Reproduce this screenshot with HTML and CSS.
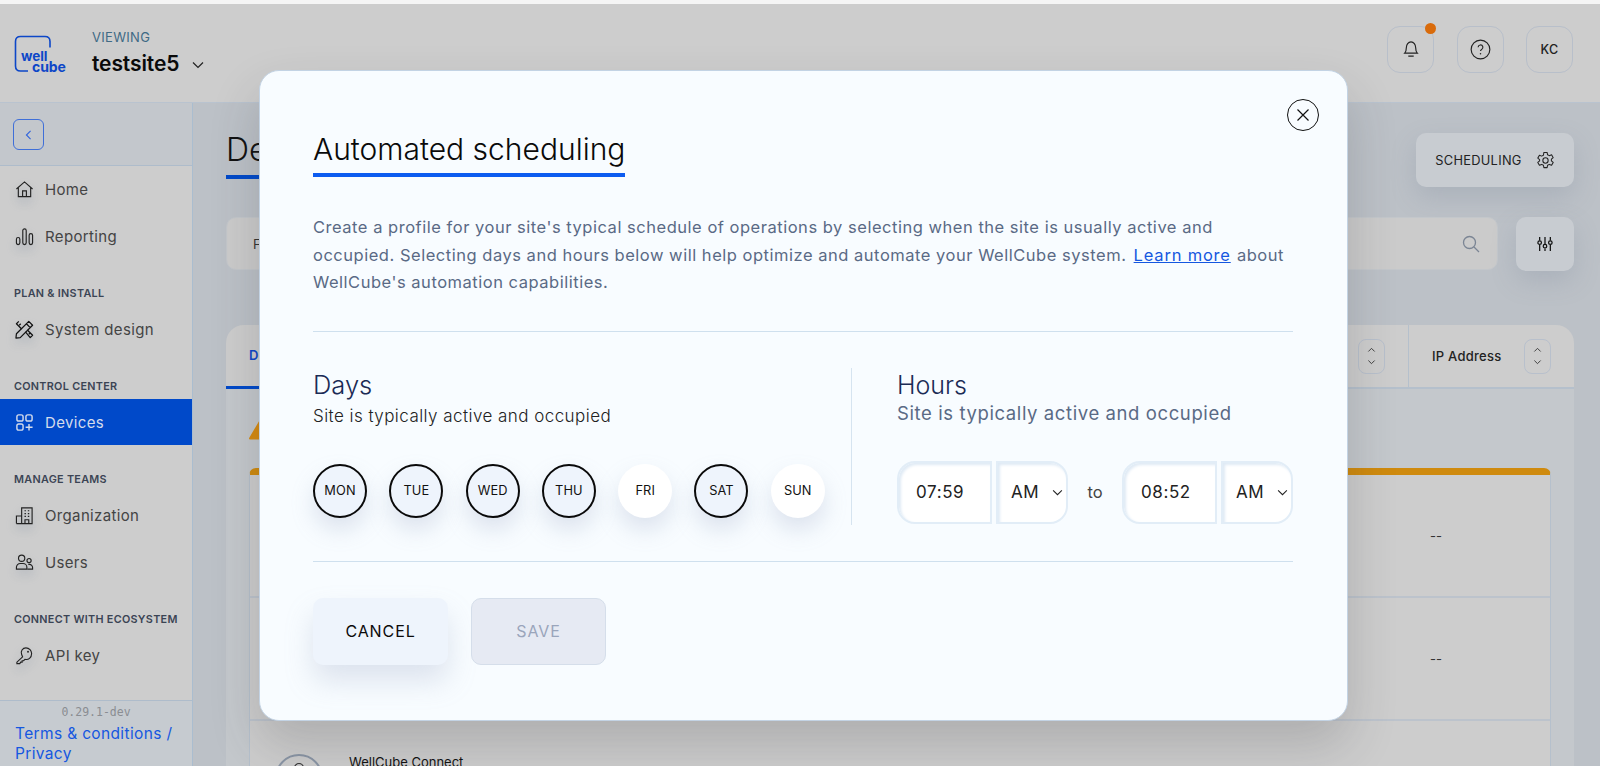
FILE: index.html
```html
<!DOCTYPE html>
<html lang="en">
<head>
<meta charset="utf-8">
<title>WellCube - Automated scheduling</title>
<link rel="stylesheet" href="styles.css">
</head>
<body>
<div class="app">
  <header class="topbar">
    <div class="logo">
      <svg class="logo-mark" viewBox="0 0 37 37" width="37" height="37"><path d="M36 12.500V6.500Q36 1.500 31 1.500H6.500Q1.500 1.500 1.500 6.500V31Q1.500 36 6.500 36H14" fill="none" stroke="#0d47c8" stroke-width="1.600"/></svg>
      <span class="logo-well">well</span>
      <span class="logo-cube">cube</span>
    </div>
    <div class="site">
      <div class="site-label">VIEWING</div>
      <div class="site-name">testsite5 <svg class="site-chev" viewBox="0 0 12 8" width="12" height="8"><path d="M1 1.500l5 5 5-5" fill="none" stroke="#222" stroke-width="1.200"/></svg></div>
    </div>
    <div class="top-actions">
      <button class="top-btn has-dot"><svg viewBox="0 0 20 22" width="18" height="20"><path d="M3 15.500c1.500-1.500 1.800-3 1.800-6C4.800 6 7 3 10 3s5.200 3 5.200 6.500c0 3 .3 4.500 1.800 6zM7 19h6" fill="none" stroke="#222" stroke-width="1.300"/></svg></button>
      <button class="top-btn"><svg viewBox="0 0 22 22" width="21" height="21"><circle cx="11" cy="11" r="9.800" fill="none" stroke="#222" stroke-width="1.200"/><path d="M8.500 8.700a2.500 2.500 0 1 1 3.700 2.200c-.8.500-1.200 1-1.200 1.800" fill="none" stroke="#222" stroke-width="1.200"/><circle cx="11" cy="15.500" r=".8" fill="#222"/></svg></button>
      <button class="top-btn top-initials">KC</button>
    </div>
  </header>

  <div class="layout">
    <aside class="sidebar">
      <div class="side-top">
        <button class="back-btn"><svg viewBox="0 0 8 12" width="7" height="10"><path d="M6.500 1L1.500 6l5 5" fill="none" stroke="#2f63dc" stroke-width="1.300"/></svg></button>
      </div>
      <nav class="side-nav">
        <div class="nav-group nav-first">
          <a class="nav-item"><svg class="ico" viewBox="0 0 20 20"><path d="M1.500 9.500L10 2l8.500 7.500M3.500 8v9.500h13V8M8 17.500v-6h4v6" fill="none" stroke="#222" stroke-width="1.200"/></svg>Home</a>
          <a class="nav-item"><svg class="ico" viewBox="0 0 20 20"><rect x="1.500" y="11" width="3.600" height="7.500" rx="1.800" fill="none" stroke="#222" stroke-width="1.200"/><rect x="8.200" y="2" width="3.600" height="16.500" rx="1.800" fill="none" stroke="#222" stroke-width="1.200"/><rect x="14.900" y="7" width="3.600" height="11.500" rx="1.800" fill="none" stroke="#222" stroke-width="1.200"/></svg>Reporting</a>
        </div>
        <div class="nav-group">
          <div class="nav-label">PLAN &amp; INSTALL</div>
          <a class="nav-item"><svg class="ico" viewBox="0 0 20 20"><path d="M14.500 1.500l4 4L5.500 18.500l-4.500.5.500-4.500zM12 4l4 4" fill="none" stroke="#111" stroke-width="1.300" stroke-linejoin="round"/><path d="M4 1.500L1.500 4 7 9.500M11 12.500l5 6 2.500-2.500-5.500-5.500M4.500 5.500l1.500-1.500M14.500 15l1.500-1.500" fill="none" stroke="#111" stroke-width="1.300" stroke-linejoin="round"/></svg>System design</a>
        </div>
        <div class="nav-group">
          <div class="nav-label">CONTROL CENTER</div>
          <a class="nav-item nav-active"><svg class="ico" viewBox="0 0 20 20"><rect x="2" y="2" width="6.500" height="6.500" rx="2" fill="none" stroke="#d4dcec" stroke-width="1.500"/><rect x="11.500" y="2" width="6.500" height="6.500" rx="2" fill="none" stroke="#d4dcec" stroke-width="1.500"/><rect x="2" y="11.500" width="6.500" height="6.500" rx="2" fill="none" stroke="#d4dcec" stroke-width="1.500"/><path d="M14.750 11.500V18.500M11.200 15h7.300" fill="none" stroke="#d4dcec" stroke-width="1.500"/></svg>Devices</a>
        </div>
        <div class="nav-group">
          <div class="nav-label">MANAGE TEAMS</div>
          <a class="nav-item"><svg class="ico" viewBox="0 0 20 20"><path d="M7 18.500V2h11v16.500zM1.500 18.500V10.500H7M1.500 18.500H18" fill="none" stroke="#222" stroke-width="1.200"/><path d="M10 5h1.500M13.500 5H15M10 8h1.500M13.500 8H15M10 11h1.500M13.500 11H15" stroke="#222" stroke-width="1.300"/><path d="M10.500 18.500v-4h4v4" fill="none" stroke="#222" stroke-width="1.200"/></svg>Organization</a>
          <a class="nav-item"><svg class="ico" viewBox="0 0 20 20"><circle cx="7" cy="5.500" r="3.300" fill="none" stroke="#222" stroke-width="1.200"/><path d="M1.500 17v-2a4 4 0 0 1 4-4h3a4 4 0 0 1 4 4v2z" fill="none" stroke="#222" stroke-width="1.200"/><circle cx="14.800" cy="8" r="2.200" fill="none" stroke="#222" stroke-width="1.200"/><path d="M14 12h1.200a3.300 3.300 0 0 1 3.300 3.300V17h-5.500" fill="none" stroke="#222" stroke-width="1.200"/></svg>Users</a>
        </div>
        <div class="nav-group">
          <div class="nav-label">CONNECT WITH ECOSYSTEM</div>
          <a class="nav-item"><svg class="ico" viewBox="0 0 20 20"><path d="M8 11.500l-6 5.500v1.500h3l1-1.500h1.500v-1.500h1.500l1.500-1.500c3.500 1 7-1.500 7-6 0-3-2.500-6-6-6-3.500 0-6 3.500-4.500 7z" fill="none" stroke="#222" stroke-width="1.200"/><circle cx="13.700" cy="6" r="1" fill="#222"/></svg>API key</a>
        </div>
      </nav>
      <div class="side-foot">
        <div class="version">0.29.1-dev</div>
        <a class="terms">Terms &amp; conditions / Privacy</a>
      </div>
    </aside>

    <main class="main">
      <div class="title-row">
        <h1 class="page-title">Devices</h1>
        <button class="sched-btn">SCHEDULING <svg viewBox="0 0 20 20" width="19" height="19"><path d="M8.300 1.500h3.400l.5 2.500 1.800.9 2.400-.9 1.700 3-1.900 1.600v1.800l1.900 1.600-1.700 3-2.400-.9-1.800.9-.5 2.500H8.300l-.5-2.500-1.800-.9-2.400.9-1.700-3 1.900-1.600V9.100L1.900 7.500l1.700-3 2.400.9 1.800-.9z" fill="none" stroke="#222" stroke-width="1.100" stroke-linejoin="round"/><circle cx="10" cy="10" r="2.800" fill="none" stroke="#222" stroke-width="1.100"/></svg></button>
      </div>
      <div class="filter-row">
        <div class="filter-bar">
          <span class="filter-text">Filter</span>
          <svg viewBox="0 0 18 18" width="18" height="18"><circle cx="7.500" cy="7.500" r="6" fill="none" stroke="#7b8594" stroke-width="1.300"/><path d="M12 12l5 5" stroke="#7b8594" stroke-width="1.300"/></svg>
        </div>
        <button class="filter-btn"><svg viewBox="0 0 18 18" width="16" height="16"><path d="M3 1v4M3 10v7M9 1v8M9 14v3M15 1v4M15 10v7" stroke="#111" stroke-width="1.400"/><circle cx="3" cy="7.500" r="2" fill="none" stroke="#111" stroke-width="1.400"/><circle cx="9" cy="11.500" r="2" fill="none" stroke="#111" stroke-width="1.400"/><circle cx="15" cy="7.500" r="2" fill="none" stroke="#111" stroke-width="1.400"/></svg></button>
      </div>
      <section class="card">
        <div class="card-head">
          <div class="tab">Devices</div>
          <div class="head-cell head-first">
            <button class="sort-btn"><svg viewBox="0 0 10 20" width="9" height="18"><path d="M1.500 5L5 1.500 8.500 5M1.500 15L5 18.500 8.500 15" fill="none" stroke="#333" stroke-width="1"/></svg></button>
          </div>
          <div class="head-cell head-ip">
            <span>IP Address</span>
            <button class="sort-btn"><svg viewBox="0 0 10 20" width="9" height="18"><path d="M1.500 5L5 1.500 8.500 5M1.500 15L5 18.500 8.500 15" fill="none" stroke="#333" stroke-width="1"/></svg></button>
          </div>
        </div>
        <div class="card-body">
          <svg class="warn" viewBox="0 0 22 20" width="22" height="20"><path d="M11 1.500L21 18.500H1z" fill="#d68a10" stroke="#d68a10" stroke-width="2" stroke-linejoin="round"/></svg>
          <div class="table">
            <div class="row"><span class="cell-ip">--</span></div>
            <div class="row"><span class="cell-ip">--</span></div>
            <div class="row row-device">
              <div class="avatar"><svg viewBox="0 0 12 12" width="12" height="12"><circle cx="6" cy="6" r="4.500" fill="none" stroke="#333" stroke-width="1.200"/></svg></div>
              <div class="device-name">WellCube Connect</div>
            </div>
          </div>
        </div>
      </section>
    </main>
  </div>

  <div class="modal">
    <button class="close-btn"><svg viewBox="0 0 14 14" width="14" height="14"><path d="M1.500 1.500l11 11M12.500 1.500l-11 11" stroke="#111" stroke-width="1.200"/></svg></button>
    <h2 class="modal-title">Automated scheduling</h2>
    <p class="modal-text">Create a profile for your site's typical schedule of operations by selecting when the site is usually active and<br>occupied. Selecting days and hours below will help optimize and automate your WellCube system. <a class="learn">Learn more</a> about<br>WellCube's automation capabilities.</p>
    <div class="sched">
      <div class="days">
        <h3 class="sec-title sec-title-days">Days</h3>
        <div class="sec-sub">Site is typically active and occupied</div>
        <div class="day-list">
          <button class="day day-on">MON</button>
          <button class="day day-on">TUE</button>
          <button class="day day-on">WED</button>
          <button class="day day-on">THU</button>
          <button class="day">FRI</button>
          <button class="day day-on">SAT</button>
          <button class="day">SUN</button>
        </div>
      </div>
      <div class="hours">
        <h3 class="sec-title">Hours</h3>
        <div class="sec-sub sec-sub-muted">Site is typically active and occupied</div>
        <div class="time-row">
          <div class="time-val">07:59</div>
          <div class="time-ampm">AM<svg class="ampm-chev" viewBox="0 0 12 8" width="11" height="7"><path d="M1 1.500l5 5 5-5" fill="none" stroke="#222" stroke-width="1.200"/></svg></div>
          <span class="time-to">to</span>
          <div class="time-val">08:52</div>
          <div class="time-ampm">AM<svg class="ampm-chev" viewBox="0 0 12 8" width="11" height="7"><path d="M1 1.500l5 5 5-5" fill="none" stroke="#222" stroke-width="1.200"/></svg></div>
        </div>
      </div>
    </div>
    <div class="modal-actions">
      <button class="btn-cancel">CANCEL</button>
      <button class="btn-save">SAVE</button>
    </div>
  </div>
</div>
</body>
</html>
```
FILE: styles.css
```css
* { box-sizing: border-box; }
html, body { margin: 0; padding: 0; height: 100%; overflow: hidden; }
body { background: #f5f5f5; font-family: Inter, "Noto Sans", sans-serif; color: #222; }
button { font-family: inherit; cursor: pointer; padding: 0; }
h1, h2, h3, p { margin: 0; }

.app { position: relative; height: 766px; padding-top: 4px; overflow: hidden; display: flex; flex-direction: column; }

/* top bar */
.topbar { height: 99px; flex: none; background: #cdcdcd; border-bottom: 1px solid #b9c3cf; display: flex; align-items: center; }
.logo { position: relative; width: 92px; height: 98px; flex: none; }
.logo-mark { position: absolute; left: 14px; top: 31px; }
.logo-well, .logo-cube { position: absolute; font-size: 13.500px; font-weight: 700; color: #0d47c8; line-height: 10px; letter-spacing: -.1px; }
.logo-well { left: 21px; top: 47px; }
.logo-cube { left: 32px; top: 58px; font-size: 14px; }
.site { padding-top: 1px; }
.site-label { font-size: 13px; line-height: 18px; color: #3f6a85; letter-spacing: .3px; }
.site-name { font-size: 21px; line-height: 30px; font-weight: 600; color: #0a0a0a; margin-top: 3px; display: flex; align-items: center; letter-spacing: -.1px; }
.site-chev { margin-left: 13px; margin-top: 2px; }
.top-actions { margin-left: auto; margin-right: 27px; display: flex; gap: 22.500px; margin-top: -8px; }
.top-btn { position: relative; width: 47px; height: 47px; border: 1px solid #b8bfca; border-radius: 13px; background: #cdcdcd; display: flex; align-items: center; justify-content: center; }
.has-dot::after { content: ""; position: absolute; width: 11px; height: 11px; border-radius: 50%; background: #d96b0b; right: -3px; top: -4px; }
.top-initials { font-size: 12.500px; font-weight: 500; color: #222; letter-spacing: .3px; }

.layout { flex: 1; display: flex; min-height: 0; }

/* sidebar */
.sidebar { width: 193px; flex: none; background: #cdcdcd; border-right: 1px solid #aabdcf; display: flex; flex-direction: column; }
.side-top { height: 63px; flex: none; background: #c3c7cc; border-bottom: 1px solid #aebccb; padding: 16px 13px; }
.back-btn { width: 31px; height: 31px; border: 1px solid #3f6fd8; border-radius: 6px; background: transparent; display: flex; align-items: center; justify-content: center; }
.side-nav { flex: 1; display: flex; flex-direction: column; }
.nav-group { margin-top: 23px; }
.nav-first { margin-top: 0; }
.nav-label { height: 24px; line-height: 24px; padding-left: 14px; font-size: 10.800px; font-weight: 600; color: #3b4454; letter-spacing: .3px; }
.nav-item { height: 46px; display: flex; align-items: center; padding-left: 15px; font-size: 15px; color: #444; letter-spacing: .35px; }
.nav-item + .nav-item { margin-top: 1px; }
.ico { width: 19px; height: 19px; margin-right: 11px; flex: none; filter: drop-shadow(0 5px 5px rgba(105,125,150,.45)); }
.nav-active { background: #0049c9; color: #d4dcec; }
.nav-active .ico { filter: none; }
.side-foot { height: 66px; flex: none; background: #c6cbd0; border-top: 1px solid #aebccb; }
.version { height: 23px; line-height: 23px; text-align: center; font-family: "DejaVu Sans Mono", "Liberation Mono", monospace; font-size: 11.500px; color: #8a8d92; }
.terms { display: block; padding: 0 10px 0 15px; font-size: 15.500px; line-height: 20px; color: #1557e0; letter-spacing: .35px; }

/* main background page */
.main { flex: 1; min-width: 0; background: #bcc1c7; padding: 27px 26px 0 33px; }
.title-row { display: flex; justify-content: space-between; align-items: flex-start; }
.page-title { font-size: 32px; line-height: 40px; font-weight: 300; color: #111; padding-bottom: 5px; border-bottom: 4px solid #0049c9; }
.sched-btn { margin-top: 3px; width: 158px; height: 54px; border: 0; border-radius: 10px; background: #c8ccd1; box-shadow: 0 10px 24px rgba(120,130,150,.25); font-size: 12.800px; font-weight: 400; color: #222; letter-spacing: .3px; display: flex; align-items: center; justify-content: center; gap: 14px; }
.filter-row { margin-top: 30px; display: flex; justify-content: space-between; }
.filter-bar { width: 1272px; height: 53px; border: 1px solid #c3c7cb; border-radius: 10px; background: #cbcbcb; padding: 0 17px 0 26px; display: flex; align-items: center; justify-content: space-between; }
.filter-text { font-size: 13px; color: #333; }
.filter-btn { width: 58px; height: 54px; border: 0; border-radius: 10px; background: #c8ccd1; box-shadow: 0 10px 24px rgba(120,130,150,.25); display: flex; align-items: center; justify-content: center; }
.card { margin-top: 54px; }
.card-head { height: 64px; background: #cdcdcd; border-radius: 18px 18px 0 0; border-bottom: 2px solid #b5c0cc; display: flex; justify-content: flex-end; position: relative; }
.tab { position: absolute; left: 0; bottom: -2px; height: 64px; padding: 0 22px 0 23px; line-height: 60px; font-size: 13px; font-weight: 600; color: #0d47c8; border-bottom: 3px solid #0049c9; }
.head-cell { display: flex; align-items: center; justify-content: space-between; }
.head-first { padding-right: 23px; }
.head-ip { width: 166px; padding: 0 23px 0 23px; border-left: 1px solid #b5c0cc; font-size: 13px; font-weight: 500; color: #222; letter-spacing: .25px; }
.sort-btn { width: 27px; height: 35px; border: 1px solid #b8c0cc; border-radius: 8px; background: transparent; display: flex; align-items: center; justify-content: center; }
.card-body { background: #c4c8cc; padding: 31px 23px 0; }
.warn { display: block; }
.table { margin-top: 28px; border-top: 7px solid #cf8a0e; border-radius: 7px 7px 0 0; border-left: 1px solid #b5c0cc; border-right: 1px solid #b5c0cc; background: #cdcdcd; }
.row { height: 123px; border-bottom: 2px solid #bcc3cc; display: flex; align-items: center; justify-content: flex-end; }
.cell-ip { width: 120px; font-size: 13px; color: #333; }
.row-device { justify-content: flex-start; align-items: flex-start; padding: 33px 0 0 25px; }
.avatar { width: 48px; height: 48px; border: 2px solid #8a95a5; border-radius: 50%; flex: none; display: flex; justify-content: center; padding-top: 6px; }
.device-name { margin-left: 26px; font-size: 13px; line-height: 16px; color: #111; }

/* modal */
.modal { position: absolute; left: 259px; top: 70px; width: 1089px; height: 651px; padding: 58px 54px 0 53px; background: #f8fcff; border: 1px solid #c3d3e4; border-radius: 20px; box-shadow: 0 24px 50px rgba(50,50,55,.2); }
.close-btn { position: absolute; right: 28px; top: 28px; width: 32px; height: 32px; border: 1.300px solid #111; border-radius: 50%; background: transparent; display: flex; align-items: center; justify-content: center; }
.modal-title { display: inline-block; font-size: 30px; line-height: 40px; font-weight: 300; color: #0a0a0a; padding-bottom: 4px; border-bottom: 4px solid #0d5cf0; }
.modal-text { margin-top: 37px; font-size: 16.500px; line-height: 27.500px; color: #5a6a85; letter-spacing: .52px; white-space: nowrap; }
.learn { color: #1557e0; text-decoration: underline; letter-spacing: .8px; margin: 0 1px 0 2px; }
.sched { margin-top: 34px; padding: 36px 0; border-top: 1px solid #cfe0ee; border-bottom: 1px solid #cfe0ee; display: flex; }
.days { width: 539px; height: 157px; border-right: 1px solid #d6e4f0; flex: none; padding-top: 2px; }
.hours { flex: 1; height: 157px; padding: 2px 0 0 45px; }
.sec-title { font-size: 25px; line-height: 30px; font-weight: 300; color: #1b2b55; }
.sec-title-days { font-size: 25.500px; }
.sec-sub { margin-top: 4px; font-size: 17px; line-height: 24px; color: #222; font-weight: 300; letter-spacing: .45px; white-space: nowrap; }
.sec-sub-muted { margin-top: 1px; font-size: 18.500px; color: #5a6a85; font-weight: 400; letter-spacing: .6px; }
.day-list { margin-top: 36px; display: flex; gap: 22.300px; }
.day { width: 54px; height: 54px; flex: none; border-radius: 50%; border: 0; background: #fff; box-shadow: 0 12px 22px rgba(150,165,195,.28); font-size: 12.800px; color: #111; letter-spacing: .1px; }
.day-on { background: #eef4fc; border: 2px solid #0a0a0a; }
.time-row { margin-top: 36px; display: flex; align-items: center; }
.time-val, .time-ampm { height: 63px; background: #fff; border: 2px solid #e2edf7; box-shadow: inset 2px 2px 3px #dfeaf5; display: flex; align-items: center; font-size: 17px; color: #222; letter-spacing: .6px; }
.time-val { width: 95px; border-radius: 18px 0 0 18px; padding-left: 17px; }
.time-ampm { width: 72px; margin-left: 4px; border-radius: 0 18px 18px 0; padding-left: 13px; position: relative; }
.ampm-chev { position: absolute; right: 3px; top: 26px; }
.time-to { width: 54px; text-align: center; font-size: 16.500px; color: #444; }
.modal-actions { margin-top: 36px; display: flex; gap: 23px; }
.btn-cancel, .btn-save { height: 67px; width: 135px; border-radius: 10px; font-size: 16px; letter-spacing: .9px; }
.btn-cancel { border: 0; background: #eef4fc; color: #0a0a0a; box-shadow: 0 16px 28px rgba(150,165,195,.28); }
.btn-save { border: 1px solid #d5deea; background: #e6eaf3; color: #9aa5bb; }
```
